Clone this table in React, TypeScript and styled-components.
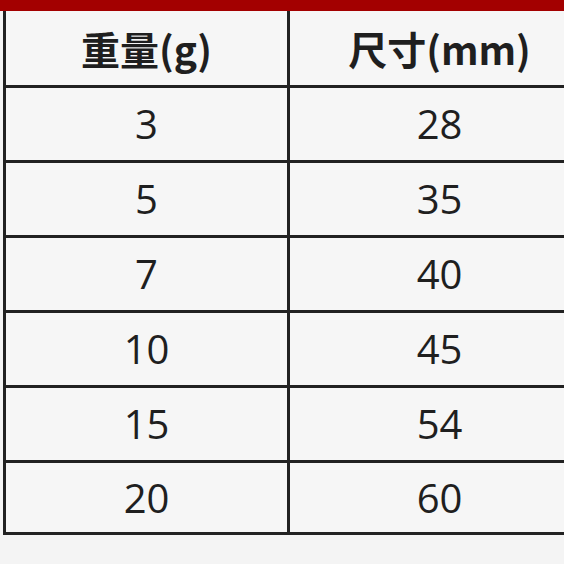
import styled, { createGlobalStyle } from "styled-components";

const GlobalStyle = createGlobalStyle`
  html, body {
    margin: 0;
    padding: 0;
    background: #f4f4f4;
  }
  body {
    width: 564px;
    height: 564px;
    overflow: hidden;
  }
`;

const rows: [string, string][] = [
    ["3", "28"],
    ["5", "35"],
    ["7", "40"],
    ["10", "45"],
    ["15", "54"],
    ["20", "60"],
];

const Page = styled.div`
    width: 564px;
    height: 564px;
    overflow: hidden;
    background: #f4f4f4;
`;

const RedBar = styled.div`
    height: 11px;
    background: #a30000;
`;

const Wrap = styled.div`
    padding-left: 3px;
    width: 590px;
`;

const Table = styled.table`
    border-collapse: collapse;
    width: 586px;
    table-layout: fixed;
    color: #1f1f1f;
`;

const Cell = styled.td<{ $head?: boolean; $last?: boolean }>`
    border: 3px solid #222;
    border-top: ${p => p.$head ? "none" : "3px solid #222"};
    text-align: center;
    padding: 0;
    height: ${p => p.$head ? "74px" : p.$last ? "69px" : "72px"};
    font-family: ${p => p.$head
        ? "\"Noto Sans CJK SC\", \"Noto Sans\", sans-serif"
        : "\"Open Sans\", \"Noto Sans\", sans-serif"};
    font-weight: ${p => p.$head ? 700 : 400};
    font-size: ${p => p.$head ? "39px" : "40px"};
    line-height: 1;
    background: #f6f6f6;
`;

export default function App() {
    return (
        <Page>
            <GlobalStyle />
            <RedBar />
            <Wrap>
                <Table>
                    <colgroup>
                        <col style={{ width: 284 }} />
                        <col style={{ width: 302 }} />
                    </colgroup>
                    <thead>
                        <tr>
                            <Cell as="th" $head>重量(g)</Cell>
                            <Cell as="th" $head>尺寸(mm)</Cell>
                        </tr>
                    </thead>
                    <tbody>
                        {rows.map(([w, s], i) => (
                            <tr key={w}>
                                <Cell $last={i === rows.length - 1}>{w}</Cell>
                                <Cell $last={i === rows.length - 1}>{s}</Cell>
                            </tr>
                        ))}
                    </tbody>
                </Table>
            </Wrap>
        </Page>
    );
}
